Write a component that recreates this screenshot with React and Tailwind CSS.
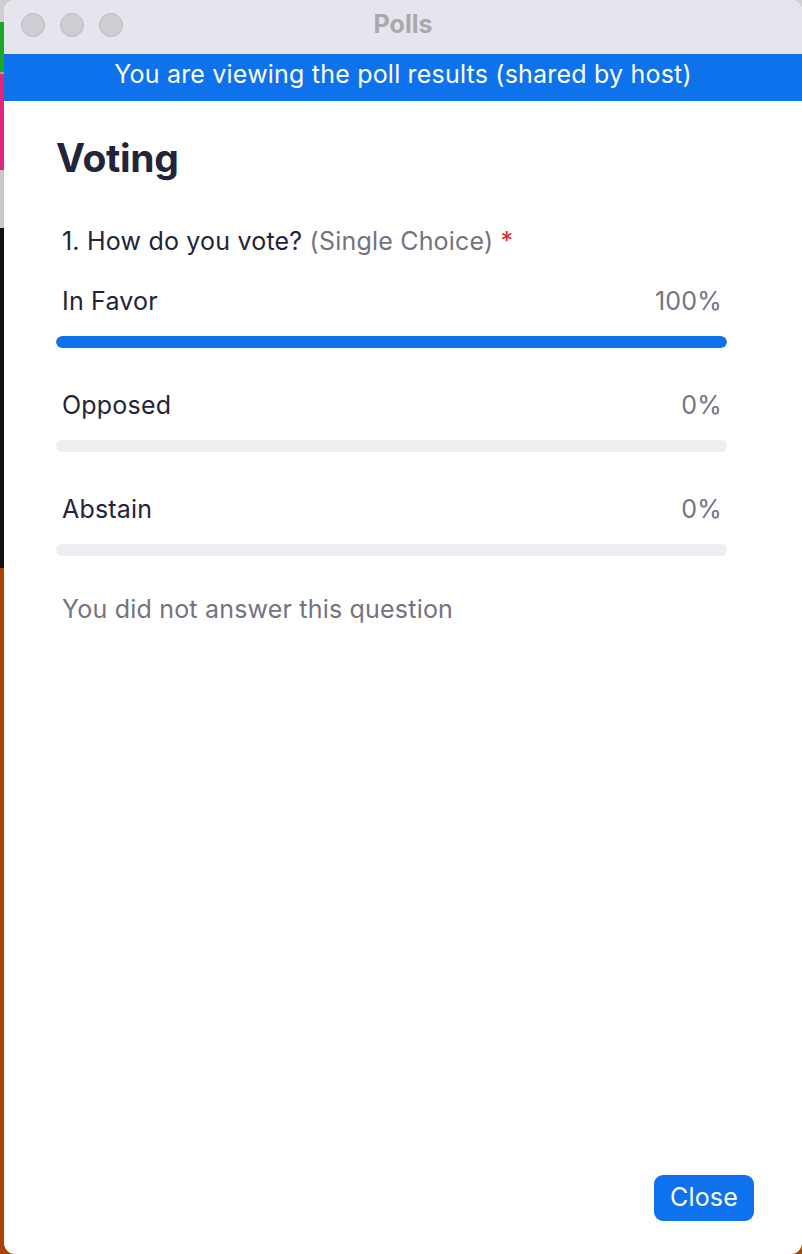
import React from 'react';

const options = [
  { label: 'In Favor', pct: 100 },
  { label: 'Opposed', pct: 0 },
  { label: 'Abstain', pct: 0 },
];

function Desktop() {
  // strips of the windows behind, only visible at the left edge and corners
  return (
    <div className="[grid-area:1/1] flex flex-col h-[1254px]">
      <div className="h-[22px] bg-[#cfcfd1]" />
      <div className="h-[50px] bg-[#1ca72a]" />
      <div className="h-[2px] bg-[#a0a0a0]" />
      <div className="h-[96px] bg-[#e0267f]" />
      <div className="h-[58px] bg-[#c9c9cc]" />
      <div className="h-[340px] bg-[#111111]" />
      <div className="flex-1 bg-[#a94300]" />
    </div>
  );
}

function TrafficLight() {
  return <div className="w-[24px] h-[24px] rounded-full bg-[#cfcdd3] border border-[#bdbbc1]" />;
}

export default function App() {
  return (
    <div className="grid w-[802px] h-[1254px] overflow-hidden" style={{ fontFamily: 'Inter, "Noto Sans", sans-serif' }}>
      <Desktop />
      <div className="[grid-area:1/1] ml-[4px] flex flex-col h-[1254px] bg-white rounded-[11px] overflow-hidden">
        {/* Title bar */}
        <div className="h-[54px] bg-[#e6e4ec] flex items-center px-[17px] relative">
          <div className="flex gap-[15px] -mt-[4px]">
            <TrafficLight />
            <TrafficLight />
            <TrafficLight />
          </div>
          <div className="absolute inset-0 flex items-center justify-center pb-[4px] text-[25px] font-bold text-[#aaa8ae]">
            Polls
          </div>
        </div>

        {/* Banner */}
        <div className="h-[47px] bg-[#0e72ed] flex items-center justify-center pb-[6px] text-white text-[25px] tracking-[0.2px]">
          You are viewing the poll results (shared by host)
        </div>

        {/* Body */}
        <div className="flex-1 flex flex-col pl-[52px] pr-[75px] tracking-[0.2px]">
          <h1 className="mt-[32px] text-[39px] font-bold text-[#23233a] leading-[50px] tracking-[-0.3px]">Voting</h1>

          <div className="mt-[43px] ml-[6px] text-[25px] leading-[30px] text-[#23233a]">
            1. How do you vote? <span className="text-[#74737f]">(Single Choice)</span>{' '}
            <span className="text-[#e02828]">*</span>
          </div>

          <div className="mt-[30px] flex flex-col gap-[42px]">
            {options.map((o) => (
              <div key={o.label} className="flex flex-col">
                <div className="flex justify-between items-center pl-[6px] pr-[5px] text-[25px] leading-[30px]">
                  <span className="text-[#23233a]">{o.label}</span>
                  <span className="text-[#74737f]">{o.pct}%</span>
                </div>
                <div className="mt-[20px] h-[12px] rounded-full bg-[#ededf2] overflow-hidden">
                  <div className="h-full rounded-full bg-[#0e72ed]" style={{ width: `${o.pct}%` }} />
                </div>
              </div>
            ))}
          </div>

          <div className="mt-[38px] ml-[6px] text-[25px] leading-[30px] text-[#74737f]">
            You did not answer this question
          </div>

          <div className="flex-1" />

          <div className="flex justify-end mb-[33px] -mr-[27px]">
            <button className="w-[100px] h-[46px] rounded-[9px] bg-[#0e72ed] text-white text-[25px]">
              Close
            </button>
          </div>
        </div>
      </div>
    </div>
  );
}
